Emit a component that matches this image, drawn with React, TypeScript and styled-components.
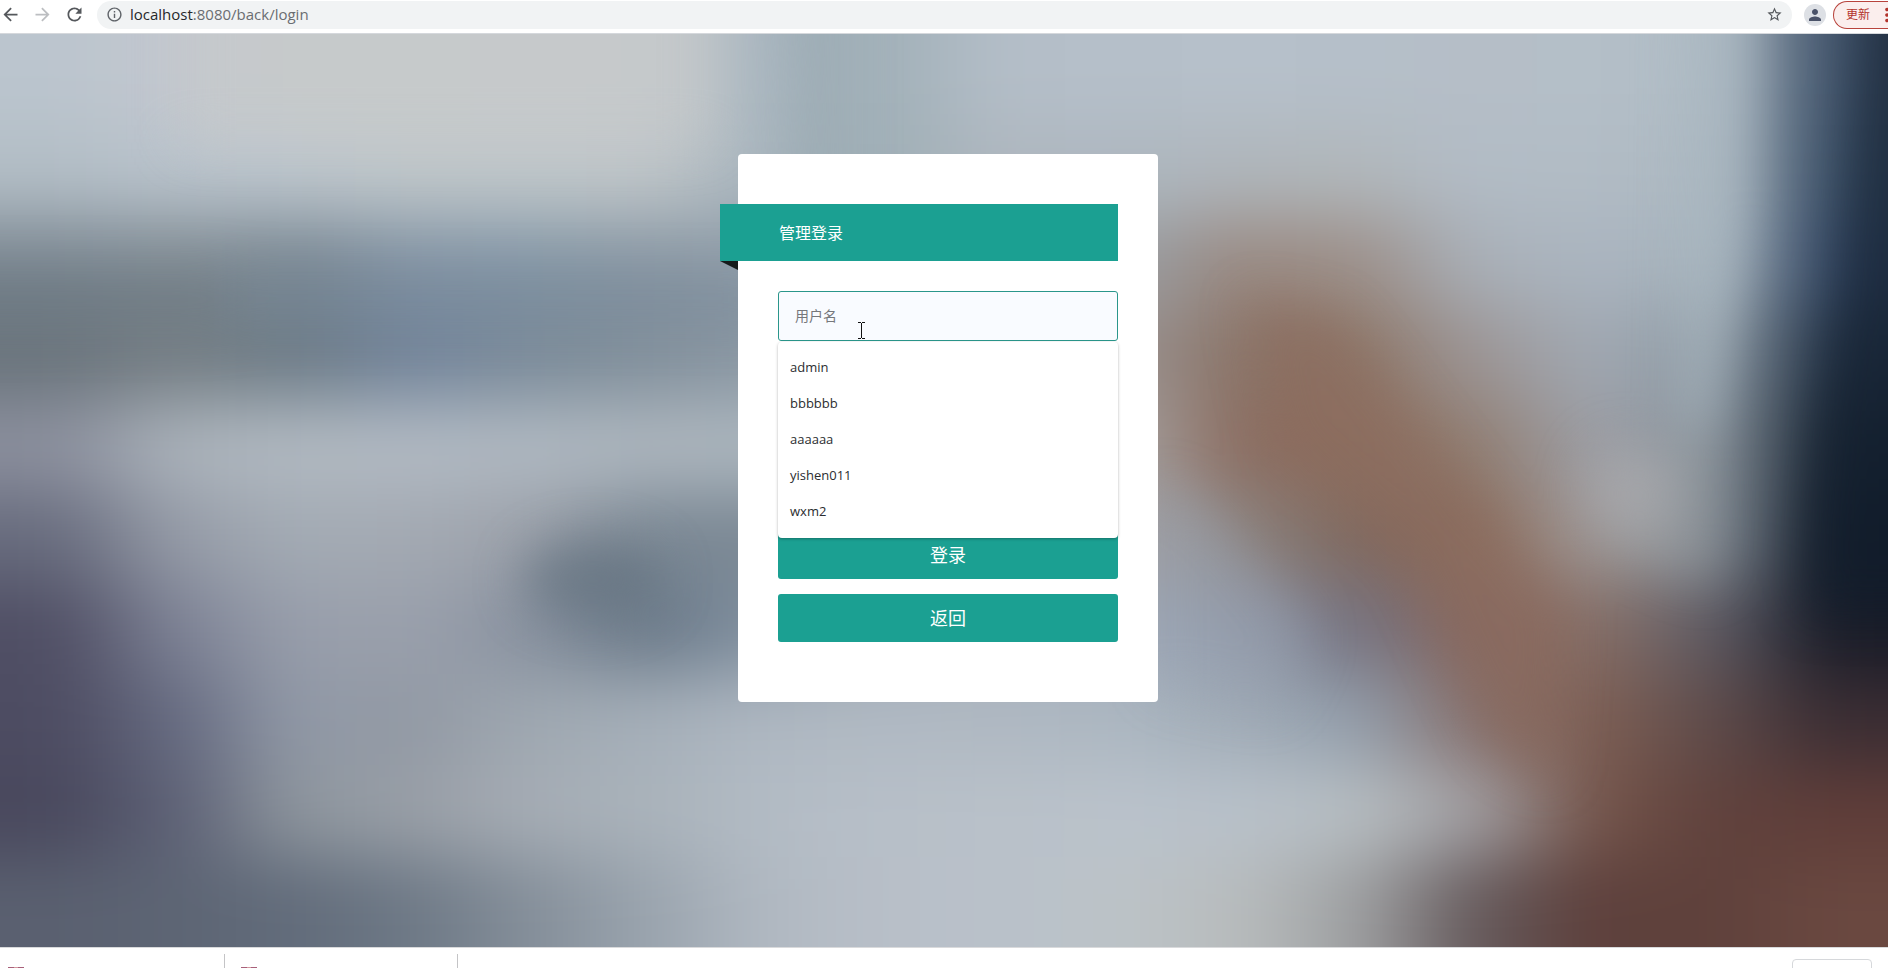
import React from "react";
import styled, { createGlobalStyle } from "styled-components";
import {
  MdArrowBack,
  MdArrowForward,
  MdInfoOutline,
  MdMoreVert,
  MdPerson,
  MdRefresh,
  MdStarBorder,
} from "react-icons/md";

const teal = "#1ba092";
const uiFont = `"Open Sans", "Noto Sans CJK SC", sans-serif`;

const GlobalStyle = createGlobalStyle`
  *, *::before, *::after { box-sizing: border-box; }
  body { margin: 0; background: #fff; font-family: ${uiFont}; }
  button, input { font-family: inherit; }
`;

const Window = styled.div`
  display: flex;
  flex-direction: column;
  min-height: 100vh;
  overflow: hidden;
`;

const Toolbar = styled.header`
  display: flex;
  align-items: center;
  height: 34px;
  padding-bottom: 4px;
  border-bottom: 1px solid #d5d8dc;
  background: #fff;
`;

const NavButtons = styled.nav`
  display: flex;
  gap: 11px;
  padding-right: 12px;
`;

const IconButton = styled.button`
  display: flex;
  flex: none;
  align-items: center;
  justify-content: center;
  width: 21px;
  height: 22px;
  padding: 0;
  border: 0;
  background: none;
  color: #55585c;
  &:disabled { color: #bcbec1; }
`;

const AddressBar = styled.div`
  display: flex;
  flex: 1;
  align-items: center;
  gap: 7px;
  height: 28px;
  padding: 0 7px 0 9px;
  border-radius: 14px;
  background: #f1f3f4;
  color: #5f6368;
`;

const AddressText = styled.span`
  flex: 1;
  padding-bottom: 2px;
  font-size: 15px;
  line-height: 20px;
  color: #6a6d71;
`;

const Host = styled.span`
  color: #26282b;
`;

const Avatar = styled(IconButton)`
  width: 22px;
  margin: 0 7px 0 12px;
  border-radius: 50%;
  background: #dde0e5;
  color: #4a5268;
`;

const UpdateButton = styled.button`
  display: flex;
  flex: none;
  align-items: center;
  justify-content: space-between;
  width: 55px;
  height: 28px;
  padding: 0 0 0 12px;
  overflow: hidden;
  border: 1px solid #b8433c;
  border-right: 0;
  border-radius: 14px 0 0 14px;
  background: #fbeeed;
  color: #b3342c;
  font-size: 12px;
  line-height: 16px;
  white-space: nowrap;
`;

const MenuDots = styled.span`
  display: flex;
  flex: none;
  width: 12px;
  svg { flex: none; }
`;

const LoginPage = styled.main`
  position: relative;
  flex: 1;
  padding: 120px 0 120px 8px;
  overflow: hidden;
  background: #b0bac4;
`;

const Backdrop = styled.svg`
  position: absolute;
  inset: 0;
  width: 100%;
  height: 100%;
`;

const Card = styled.section`
  position: relative;
  width: 420px;
  margin: 0 auto;
  padding: 50px 40px 60px;
  border-radius: 4px;
  background: #fff;
`;

const Ribbon = styled.h1`
  position: relative;
  margin: 0 0 30px -58px;
  padding: 19px 59px 17px;
  background: ${teal};
  color: #fff;
  font-size: 16px;
  font-weight: 400;
  line-height: 21px;

  &::after {
    content: "";
    position: absolute;
    top: 100%;
    left: 0;
    border-top: 9px solid #161b1b;
    border-left: 18px solid transparent;
  }
`;

const Form = styled.form`
  display: flex;
  flex-direction: column;
  gap: 15px;
`;

const Field = styled.div`
  position: relative;
`;

const TextInput = styled.input<{ $active?: boolean }>`
  display: block;
  width: 100%;
  height: 50px;
  padding: 0 16px 2px;
  border: 1px solid ${(p) => (p.$active ? "#2a968b" : "#dcdee0")};
  border-radius: 3px;
  outline: 0;
  background: ${(p) => (p.$active ? "#f9fbff" : "#fff")};
  font-size: 14px;
  &::placeholder { color: #76777b; }
`;

const Suggestions = styled.ul`
  position: absolute;
  top: 100%;
  left: 0;
  right: 0;
  z-index: 1;
  margin: 1px 0 0;
  padding: 7px 0 9px;
  border-radius: 4px;
  background: #fff;
  box-shadow: 0 1px 3px rgba(0, 0, 0, 0.3);
  list-style: none;
`;

const Suggestion = styled.li`
  padding: 0 12px;
  color: #2b2d30;
  font-size: 13px;
  line-height: 36px;
`;

const Pointer = styled.svg`
  position: absolute;
  top: 31px;
  left: 80px;
  z-index: 2;
`;

const Actions = styled.div`
  display: flex;
  flex-direction: column;
  gap: 15px;
  padding-top: 45px;
`;

const ActionButton = styled.button`
  height: 48px;
  padding: 0;
  border: 0;
  border-radius: 3px;
  background: ${teal};
  color: #fff;
  font-size: 18px;
  line-height: 24px;
`;

const DownloadShelf = styled.footer`
  display: flex;
  align-items: flex-start;
  height: 21px;
  padding-right: 16px;
  overflow: hidden;
  border-top: 1px solid #d9dadc;
  background: #fff;
`;

const DownloadItem = styled.div<{ $width: number; $inset: number }>`
  width: ${(p) => p.$width}px;
  height: 14px;
  margin-top: 6px;
  padding: 13px 0 0 ${(p) => p.$inset}px;
  border-right: 1px solid #c4c4c6;
`;

const ArchiveIcon = styled.svg`
  display: block;
`;

const ShelfButton = styled.button`
  flex: none;
  width: 80px;
  height: 30px;
  margin: 11px 0 0 auto;
  border: 1px solid #d6d8db;
  border-radius: 4px;
  background: #fff;
`;

const accounts = ["admin", "bbbbbb", "aaaaaa", "yishen011", "wxm2"];
const downloads = [
  { width: 225, inset: 8 },
  { width: 233, inset: 16 },
];

// Colour field of the out-of-focus backdrop, row by row from the top.
const tones = [
  "bbc5ce c3c7cf c6caca c6caca c6c9cb c5c9cb a9b6c0 a1b0b8 b4bec8 b5bfc9 b6c0ca b5bfc9 b5bec7 b4bfc8 b0bcc5 40536b",
  "b3bec6 b9c3cc bdc6cd c0c7ca c0c7ca c0c6c9 a7b4bd 9fafb6 afb7bf aeb7c0 afb6bb b1b7bb b2bcc6 b2bcc5 acb8c1 3b5068",
  "7f8b95 848f97 7b8994 8596a7 8799a8 8b99a5 909da9 98a5ae 98a5ae 989ea4 9a8a82 9c8f89 a9b0b8 abb5c0 a5b2bb 334764",
  "6a747c 757e84 6c7b86 72849b 7a8a98 818f9b 8a97a3 98a2aa 9da3a9 9a9290 8a7468 8e7768 9c9595 a1a9b3 8d99a3 253549",
  "8c909e abb3bb b1b9c1 b1b9c2 afb8c1 adb6be acb6be a4abb2 a4a8ac a6a4a3 8b6c60 8c7060 917e72 9d9fa6 858f98 192635",
  "686c7e 959ba7 a3abb4 a3a9b2 9ca1aa 7b8894 7a8794 949ca6 9fa5ac a4a7ad 8b8380 7f685e 8b6d5d 9f9795 828b94 121c2a",
  "504f65 7d8295 989eab 9aa0ac 88919f 6a7988 8190a0 9aa4b0 a3adb8 a1acba 8e96a6 747280 876860 876f67 5f5c65 191c28",
  "4d4c62 666b81 9199a7 9299a4 9fa8b1 a5afb9 aeb7c1 b1bac3 afb8c2 acb7c1 a1acb7 929eac 86716e 7e5f54 5f4c4b 3a2d33",
  "49485d 5d6176 8e969e 999fa7 a6adb5 aab3bb b3bcc5 b7bfc8 b9c1c9 bac2cb b8c1ca b7bec2 a19fa3 75554b 60423d 5f3d39",
  "5a6070 5d6574 626c7b 6e7986 858f9a 9aa4ae b1b9c2 b8bfc8 b9c1ca bcc3c7 b8bcbd 9ea0a2 655a5c 5e403c 5f413c 6a4840",
].map((row) => row.split(" ").map((hex) => `#${hex}`));

const cellWidth = 98;
const cellHeight = 76;
const bleed = 150;

function BlurredPhoto() {
  const lastRow = tones.length - 1;
  const lastColumn = tones[0].length - 1;
  return (
    <Backdrop viewBox="0 0 1568 759" preserveAspectRatio="none" aria-hidden="true">
      <defs>
        {["20 20", "40 28"].map((spread) => (
          <filter
            key={spread}
            id={`soft${spread.slice(0, 2)}`}
            filterUnits="userSpaceOnUse"
            x="-150"
            y="-150"
            width="1868"
            height="1060"
            colorInterpolationFilters="sRGB"
          >
            <feGaussianBlur stdDeviation={spread} />
          </filter>
        ))}
      </defs>
      <g filter="url(#soft40)" shapeRendering="crispEdges">
        {tones.map((row, r) =>
          row.map((tone, c) => {
            const left = c === 0 ? -bleed : c * cellWidth;
            const top = r === 0 ? -bleed : r * cellHeight;
            const right = (c + 1) * cellWidth + (c === lastColumn ? bleed : 0);
            const bottom = (r + 1) * cellHeight + (r === lastRow ? bleed : 0);
            return (
              <rect key={`${r}-${c}`} x={left} y={top} width={right - left} height={bottom - top} fill={tone} />
            );
          })
        )}
      </g>
      <g filter="url(#soft20)">
        <path d="M-80 195H190V245H-80Z" fill="#65707a" opacity="0.4" />
        <path d="M190 200H640V240H190Z" fill="#6f8093" opacity="0.35" />
        <path d="M1550-80H1700V480H1500Q1500 350 1525 230Z" fill="#101c2c" opacity="0.6" />
        <path d="M1400-80H1455V150L1425 330H1395Z" fill="#b1bec7" opacity="0.6" />
        <path d="M1395 330L1430 330L1425 460L1330 420Z" fill="#a3a8ad" opacity="0.35" />
        <ellipse cx="492" cy="453" rx="58" ry="32" fill="#5f6f7d" opacity="0.65" />
        <ellipse cx="1352" cy="378" rx="36" ry="38" fill="#adaeb1" opacity="0.6" />
        <path d="M1035 220L1110 235L1300 480L1290 620L1240 590L1170 440L1060 340Z" fill="#8b6a5c" opacity="0.5" />
        <path d="M960 370L1010 400L1090 500L1060 560L960 540Z" fill="#9ba5b3" opacity="0.4" />
        <path d="M650-80H705V150H660Z" fill="#98a7af" opacity="0.5" />
        <path d="M150-80H590V90H150Z" fill="#c7cacb" opacity="0.6" />
      </g>
    </Backdrop>
  );
}

export default function App() {
  return (
    <Window>
      <GlobalStyle />
      <Toolbar>
        <NavButtons>
          <IconButton aria-label="后退"><MdArrowBack size={21} /></IconButton>
          <IconButton aria-label="前进" disabled><MdArrowForward size={21} /></IconButton>
          <IconButton aria-label="刷新"><MdRefresh size={21} /></IconButton>
        </NavButtons>
        <AddressBar>
          <MdInfoOutline size={17} />
          <AddressText><Host>localhost</Host>:8080/back/login</AddressText>
          <IconButton aria-label="收藏"><MdStarBorder size={17} /></IconButton>
        </AddressBar>
        <Avatar aria-label="用户"><MdPerson size={18} /></Avatar>
        <UpdateButton>
          更新
          <MenuDots><MdMoreVert size={22} /></MenuDots>
        </UpdateButton>
      </Toolbar>

      <LoginPage>
        <BlurredPhoto />
        <Card>
          <Ribbon>管理登录</Ribbon>
          <Form onSubmit={(event) => event.preventDefault()}>
            <Field>
              <TextInput $active type="text" aria-label="用户名" placeholder="用户名" autoComplete="off" />
              <Suggestions>
                {accounts.map((name) => (
                  <Suggestion key={name}>{name}</Suggestion>
                ))}
              </Suggestions>
              <Pointer width="8" height="17" viewBox="0 0 8 17" aria-hidden="true">
                <path d="M0 0.5H3M4 0.5H7M3.5 1V16M0 16.5H3M4 16.5H7" stroke="#111" fill="none" />
              </Pointer>
            </Field>
            <TextInput type="password" aria-label="密码" />
            <TextInput type="text" aria-label="验证码" />
            <Actions>
              <ActionButton type="submit">登录</ActionButton>
              <ActionButton type="button">返回</ActionButton>
            </Actions>
          </Form>
        </Card>
      </LoginPage>

      <DownloadShelf>
        {downloads.map(({ width, inset }) => (
          <DownloadItem key={width} $width={width} $inset={inset}>
            <ArchiveIcon width="16" height="1" viewBox="0 0 16 1" aria-hidden="true">
              <path d="M0 0H16V1H0Z" fill="#a8607a" />
              <path d="M6 0H10V1H6Z" fill="#d59a9f" />
            </ArchiveIcon>
          </DownloadItem>
        ))}
        <ShelfButton aria-label="全部显示" />
      </DownloadShelf>
    </Window>
  );
}
